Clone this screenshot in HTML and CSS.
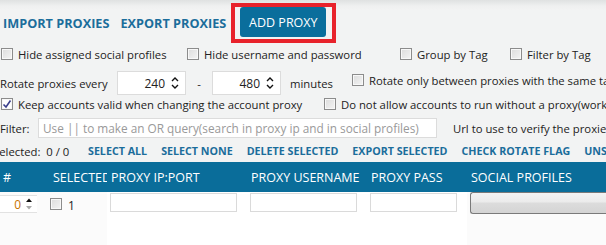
FILE: index.html
```html
<!DOCTYPE html>
<html>
<head>
<meta charset="utf-8">
<link rel="stylesheet" href="styles.css">
</head>
<body>
<div class="page">
  <div class="toolbar">
    <a class="link big">IMPORT PROXIES</a>
    <a class="link big">EXPORT PROXIES</a>
    <div class="highlight"><button class="primary">ADD PROXY</button></div>
  </div>

  <div class="row r2">
    <label class="opt w186"><span class="cb"></span>Hide assigned social profiles</label>
    <label class="opt w213"><span class="cb"></span>Hide username and password</label>
    <label class="opt w110"><span class="cb"></span>Group by Tag</label>
    <label class="opt"><span class="cb"></span>Filter by Tag</label>
  </div>

  <div class="row r3">
    <span class="lbl w117">Rotate proxies every</span>
    <div class="num"><span>240</span><svg class="spin" width="8" height="14" viewBox="0 0 8 14"><path d="M1 5 L4 2 L7 5 M1 9 L4 12 L7 9" fill="none" stroke="#111" stroke-width="1.4"/></svg></div>
    <span class="dash">-</span>
    <div class="num"><span>480</span><svg class="spin" width="8" height="14" viewBox="0 0 8 14"><path d="M1 5 L4 2 L7 5 M1 9 L4 12 L7 9" fill="none" stroke="#111" stroke-width="1.4"/></svg></div>
    <span class="lbl mins">minutes</span>
    <label class="opt up"><span class="cb"></span>Rotate only between proxies with the same tag</label>
  </div>

  <div class="row r4">
    <label class="opt w323"><span class="cb checked"><svg width="10" height="10" viewBox="0 0 10 10"><path d="M1.5 5.5 L4 8 L8.5 1.5" fill="none" stroke="#3a3f8c" stroke-width="1.6"/></svg></span>Keep accounts valid when changing the account proxy</label>
    <label class="opt"><span class="cb"></span>Do not allow accounts to run without a proxy(working)</label>
  </div>

  <div class="row r5">
    <span class="lbl w38">Filter:</span>
    <div class="filter">Use || to make an OR query(search in proxy ip and in social profiles)</div>
    <span class="lbl url">Url to use to verify the proxies</span>
  </div>

  <div class="row r6">
    <span class="lbl sel">Selected:&nbsp; 0 / 0</span>
    <a class="link">SELECT ALL</a>
    <a class="link">SELECT NONE</a>
    <a class="link">DELETE SELECTED</a>
    <a class="link">EXPORT SELECTED</a>
    <a class="link">CHECK ROTATE FLAG</a>
    <a class="link">UNSELECT</a>
  </div>

  <div class="grid head">
    <div class="hc">#</div>
    <div class="hc">SELECTED</div>
    <div class="hc">PROXY IP:PORT</div>
    <div class="hc">PROXY USERNAME</div>
    <div class="hc">PROXY PASS</div>
    <div class="hc">SOCIAL PROFILES</div>
  </div>

  <div class="grid body">
    <div class="c1"><div class="rownum"><span>0</span><svg width="8" height="14" viewBox="0 0 8 14"><path d="M1 5 L4 1.5 L7 5 Z" fill="#111"/><path d="M1 9 L4 12.5 L7 9 Z" fill="#aaa"/></svg></div></div>
    <div class="c2"><span class="cb"></span><span class="idx">1</span></div>
    <div class="cell white"><div class="inp w127"></div></div>
    <div class="cell white"><div class="inp w107"></div></div>
    <div class="cell white"><div class="inp w87"></div></div>
    <div class="cell"><div class="gbtn"></div></div>
  </div>
</div>
</body>
</html>
```
FILE: styles.css
```css
html, body { margin: 0; padding: 0; }
body {
  width: 606px; height: 245px; overflow: hidden;
  font-family: "Open Sans", "Noto Sans", sans-serif;
  font-size: 11.3px; color: #222;
  background: #f2f3f3;
}
.page {
  height: 245px;
  background: linear-gradient(#dfe1e1 0px, #eff0f0 6px, #f2f3f3 10px);
  overflow: hidden;
}
.link { color: #1b6d9b; font-weight: 700; white-space: nowrap; }
.toolbar { display: flex; align-items: center; height: 40px; padding: 3px 0 0 3px; box-sizing: content-box; }
.toolbar > * { flex: none; }
.big { font-size: 12.7px; margin-right: 11px; }
.highlight { border: 4px solid #e8222b; padding: 0 6px 2px 5px; margin-left: -6px; height: 40px; box-sizing: border-box; }
.primary {
  width: 86px; height: 30px; border: 0; border-radius: 3px; display: block;
  background: #0a6e9c; color: #fff; font-family: inherit; font-size: 12.5px; padding: 0;
}
.row { display: flex; align-items: center; white-space: nowrap; }
.row > * { flex: none; }
.r2 { height: 16px; margin-top: 3px; }
.r3 { height: 26px; margin-top: 8px; }
.r4 { height: 16px; }
.r5 { height: 24px; margin-top: 4px; }
.r6 { height: 22px; }
.opt { display: flex; align-items: center; }
.cb {
  width: 10px; height: 10px; border: 1px solid #8c8c8c; margin: 0 5px 0 1px;
  background: linear-gradient(135deg, #dcdcdc, #f4f4f4);
  box-shadow: inset 0 0 0 1px #f8f8f8;
  display: inline-flex; align-items: center; justify-content: center; flex: none;
}
.cb.checked { background: #fff; }
.w186 { width: 186px; }
.w213 { width: 213px; }
.w110 { width: 110px; }
.w117 { width: 117px; }
.w323 { width: 323px; }
.w38 { width: 38px; }
.num {
  width: 69px; height: 24px; box-sizing: border-box; background: #fff; border: 1px solid #dcdcdc;
  display: flex; align-items: center; justify-content: flex-end; gap: 6px; padding-right: 6px; font-size: 12px;
}
.dash { width: 26px; text-align: center; }
.mins { width: 61px; margin-left: 9px; }
.up { margin-top: -6px; }
.filter {
  width: 399px; height: 20px; box-sizing: border-box; background: #fff; border: 1px solid #dcdcdc;
  color: #999; padding: 1px 0 0 4px; line-height: 16px; font-size: 11.8px; overflow: hidden;
}
.url { margin-left: 16px; }
.sel { margin-left: -7px; width: 95px; }
.r6 .link { font-size: 10.7px; margin-right: 14px; }
.grid { display: grid; grid-template-columns: 49px 58px 140px 120px 100px 1fr; }
.head { background: #0a6d9a; color: #fff; height: 30px; font-size: 12.5px; }
.hc { display: flex; align-items: center; padding-left: 4px; overflow: hidden; white-space: nowrap; }
.hc:first-child { padding-left: 3px; }
.body { height: 53px; background: #fbfbfb; }
.c1 { padding-top: 3px; }
.rownum {
  width: 37px; height: 18px; box-sizing: border-box; background: #fff; border-top: 1px solid #e2e2e2; border-bottom: 1px solid #e2e2e2;
  display: flex; align-items: center; justify-content: flex-end; gap: 4px; padding-right: 4px; font-size: 12px; color: #c77400;
}
.c2 { display: flex; align-items: flex-start; padding-top: 5px; }
.c2 .cb { margin: 1px 5px 0 1px; }
.idx { font-size: 12px; color: #222; margin-left: 1px; }
.cell { padding-top: 1px; }
.white { background: #fff; box-shadow: 0 14px 10px -6px #fff; }
.inp { height: 19px; box-sizing: border-box; border: 1px solid #dadada; background: #fff; margin-left: 3px; }
.w127 { width: 127px; }
.w107 { width: 107px; }
.w87 { width: 87px; }
.gbtn {
  height: 22px; box-sizing: border-box; margin-left: 3px; margin-top: -1px; border: 1px solid #7a7a7a; border-right: 0;
  border-radius: 3px 0 0 3px; background: linear-gradient(#f3f3f3, #ebebeb 45%, #dcdcdc 50%, #d4d4d4);
}
```
